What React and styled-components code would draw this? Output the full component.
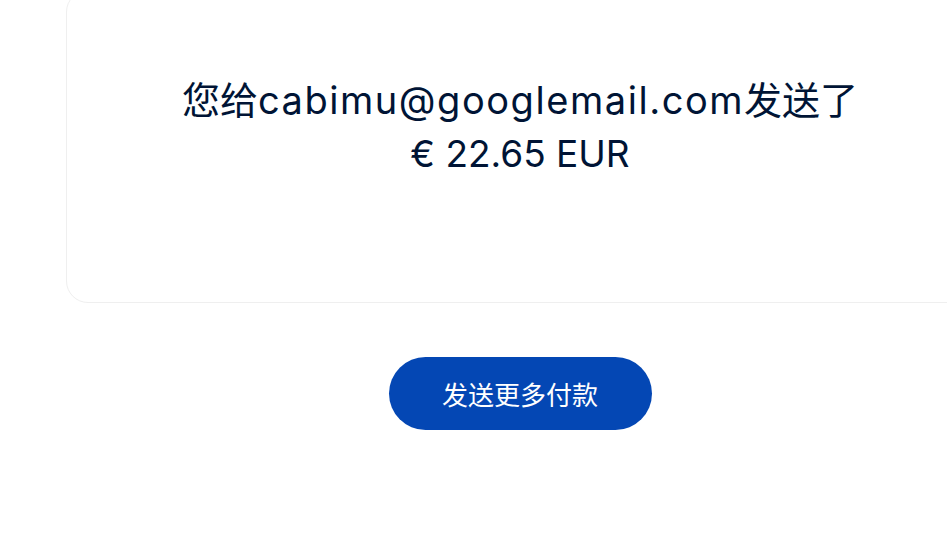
import React from 'react';
import styled, { createGlobalStyle } from 'styled-components';

const GlobalStyle = createGlobalStyle`
    html, body {
        margin: 0;
        padding: 0;
        background: #fff;
        overflow: hidden;
    }
    body {
        font-family: Inter, "Noto Sans CJK SC", sans-serif;
        color: #001435;
    }
`;

const Page = styled.div`
    width: 947px;
    height: 541px;
    padding-left: 66px;
    box-sizing: border-box;
    display: flex;
    flex-direction: column;
`;

const Card = styled.div`
    margin-top: -10px;
    width: 908px;
    height: 313px;
    flex-shrink: 0;
    box-sizing: border-box;
    border: 1px solid #efefef;
    border-radius: 22px;
    display: flex;
    flex-direction: column;
    align-items: center;
    padding-top: 83px;
`;

const Message = styled.h1`
    margin: 0;
    font-weight: 400;
    text-align: center;
    white-space: nowrap;
    color: #001435;
`;

const Line = styled.span`
    display: block;
    font-size: ${p => p.size}px;
    line-height: 53px;
`;

const Email = styled.span`
    letter-spacing: 1.55px;
`;

const Actions = styled.div`
    width: 908px;
    display: flex;
    justify-content: center;
    padding-top: 54px;
`;

const Button = styled.button`
    width: 263px;
    height: 73px;
    border: none;
    border-radius: 37px;
    background: #0447b4;
    color: #fff;
    font-family: Inter, "Noto Sans CJK SC", sans-serif;
    font-size: 26px;
    cursor: pointer;
`;

const App = () => (
    <Page>
        <GlobalStyle />
        <Card>
            <Message>
                <Line size={38}>
                    您给<Email>cabimu@googlemail.com</Email>发送了
                </Line>
                <Line size={37}>€ 22.65 EUR</Line>
            </Message>
        </Card>
        <Actions>
            <Button>发送更多付款</Button>
        </Actions>
    </Page>
);

export default App;
